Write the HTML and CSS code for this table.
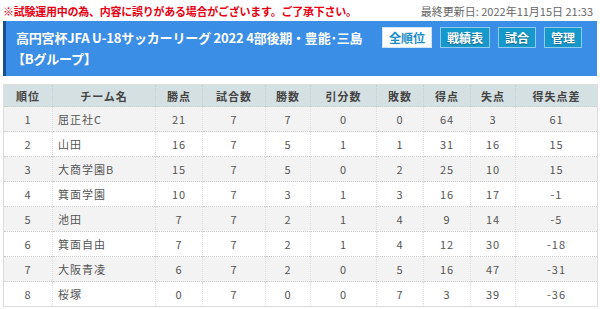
FILE: index.html
```html
<!DOCTYPE html>
<html lang="ja">
<head>
<meta charset="utf-8">
<link rel="stylesheet" href="styles.css">
</head>
<body>
<div class="topbar">
  <div class="notice">※試験運用中の為、内容に誤りがある場合がございます。ご了承下さい。</div>
  <div class="updated">最終更新日: 2022年11月15日 21:33</div>
</div>
<div class="head">
  <div class="title">
    <div>高円宮杯JFA U-18サッカーリーグ 2022 4部後期・豊能･三島</div>
    <div class="group">【Bグループ】</div>
  </div>
  <div class="btns">
    <span class="btn active">全順位</span>
    <span class="btn">戦績表</span>
    <span class="btn">試合</span>
    <span class="btn">管理</span>
  </div>
</div>
<table class="standings">
  <colgroup>
    <col class="c-rank"><col class="c-team"><col class="c-pt"><col class="c-gp"><col class="c-w"><col class="c-d"><col class="c-l"><col class="c-gf"><col class="c-ga"><col class="c-gd">
  </colgroup>
  <thead>
    <tr><th>順位</th><th>チーム名</th><th>勝点</th><th>試合数</th><th>勝数</th><th>引分数</th><th>敗数</th><th>得点</th><th>失点</th><th>得失点差</th></tr>
  </thead>
  <tbody>
    <tr><td>1</td><td class="team">屈正社C</td><td>21</td><td>7</td><td>7</td><td>0</td><td>0</td><td>64</td><td>3</td><td>61</td></tr>
    <tr><td>2</td><td class="team">山田</td><td>16</td><td>7</td><td>5</td><td>1</td><td>1</td><td>31</td><td>16</td><td>15</td></tr>
    <tr><td>3</td><td class="team">大商学園B</td><td>15</td><td>7</td><td>5</td><td>0</td><td>2</td><td>25</td><td>10</td><td>15</td></tr>
    <tr><td>4</td><td class="team">箕面学園</td><td>10</td><td>7</td><td>3</td><td>1</td><td>3</td><td>16</td><td>17</td><td>-1</td></tr>
    <tr><td>5</td><td class="team">池田</td><td>7</td><td>7</td><td>2</td><td>1</td><td>4</td><td>9</td><td>14</td><td>-5</td></tr>
    <tr><td>6</td><td class="team">箕面自由</td><td>7</td><td>7</td><td>2</td><td>1</td><td>4</td><td>12</td><td>30</td><td>-18</td></tr>
    <tr><td>7</td><td class="team">大阪青凌</td><td>6</td><td>7</td><td>2</td><td>0</td><td>5</td><td>16</td><td>47</td><td>-31</td></tr>
    <tr><td>8</td><td class="team">桜塚</td><td>0</td><td>7</td><td>0</td><td>0</td><td>7</td><td>3</td><td>39</td><td>-36</td></tr>
  </tbody>
</table>
</body>
</html>
```
FILE: styles.css
```css
html, body {
  margin: 0;
  padding: 0;
  background: #fff;
}
body {
  padding: 0 3px;
  font-family: "Noto Sans CJK JP", "Noto Sans", sans-serif;
}
.topbar {
  display: flex;
  justify-content: space-between;
  align-items: center;
  height: 21px;
  font-size: 11px;
  line-height: 20px;
  white-space: nowrap;
}
.notice {
  color: #e60012;
  font-weight: bold;
  letter-spacing: -0.25px;
}
.updated {
  color: #666;
  padding-right: 4px;
}
.head {
  display: flex;
  justify-content: space-between;
  align-items: flex-start;
  background: #3b8ee6;
  border-left: 3px solid #1b4f93;
  padding: 6px 15px 7px 10px;
}
.title {
  color: #fff;
  font-weight: bold;
  font-size: 13px;
  line-height: 21px;
  white-space: nowrap;
  letter-spacing: -0.2px;
}
.group {
  margin-left: -4px;
}
.btns {
  display: flex;
  gap: 8px;
  flex-shrink: 0;
}
.btn {
  display: block;
  height: 19px;
  line-height: 19px;
  padding: 0 6px;
  font-size: 12px;
  font-weight: bold;
  white-space: nowrap;
  color: #fff;
  background: #1598cc;
  border: 1px solid #8fc9ee;
  text-shadow: 0 1px 1px rgba(0,0,0,0.35);
}
.btn.active {
  background: #fff;
  color: #1a8cc8;
  text-shadow: none;
  border-color: #d0e6f6;
}
.standings {
  margin-top: 8px;
  width: 594px;
  table-layout: fixed;
  border-collapse: collapse;
  font-size: 11px;
  color: #555;
  border: 1px solid #ddd;
}
.c-rank { width: 49px; }
.c-team { width: 103px; }
.c-pt { width: 47px; }
.c-gp { width: 63px; }
.c-w { width: 45px; }
.c-d { width: 66px; }
.c-l { width: 47px; }
.c-gf { width: 47px; }
.c-ga { width: 45px; }
.c-gd { width: 82px; }
.standings th {
  background: #d4e0e1;
  color: #444;
  font-weight: bold;
  height: 21px;
  padding: 0;
  text-align: center;
  letter-spacing: 1px;
  border-left: 1px dotted #c4cfd0;
}
.standings td {
  height: 24px;
  padding: 0;
  text-align: center;
  letter-spacing: 1px;
  border-top: 1px dotted #ccc;
  border-left: 1px dotted #ddd;
}
.standings td.team {
  text-align: left;
  padding-left: 5px;
}
.standings tbody tr:nth-child(odd) td {
  background: #f3f3f3;
}
.standings tbody tr:nth-child(even) td {
  background: #fff;
}
```
